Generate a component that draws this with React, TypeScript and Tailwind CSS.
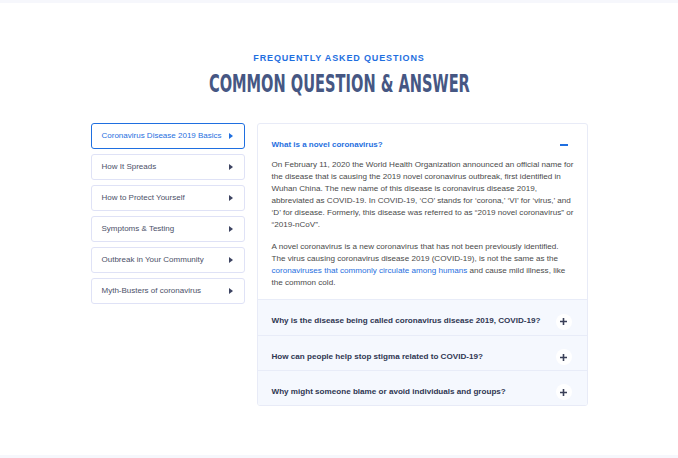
import React from "react";

const tabs = [
  "Coronavirus Disease 2019 Basics",
  "How It Spreads",
  "How to Protect Yourself",
  "Symptoms & Testing",
  "Outbreak in Your Community",
  "Myth-Busters of coronavirus",
];

const questions = [
  "Why is the disease being called coronavirus disease 2019, COVID-19?",
  "How can people help stop stigma related to COVID-19?",
  "Why might someone blame or avoid individuals and groups?",
];

function Caret({ active }: { active: boolean }) {
  return (
    <svg width="4" height="6" viewBox="0 0 4 6" className={active ? "text-[#1f6fe0]" : "text-[#3d4462]"}>
      <path d="M0 0 L4 3 L0 6 Z" fill="currentColor" />
    </svg>
  );
}

export default function App() {
  return (
    <div className="w-[678px] h-[458px] bg-white flex flex-col" style={{ fontFamily: '"Liberation Sans", Arial, sans-serif' }}>
      <div className="h-[3px] bg-[#f6f7fc]" />
      <div className="flex-1 flex flex-col items-center">
        <div className="mt-[49px] text-[9px] font-bold tracking-[0.85px] text-[#1f6fe0] leading-[12px]">
          FREQUENTLY ASKED QUESTIONS
        </div>
        <h2
          className="mt-[5px] text-[25px] font-bold text-[#465783] leading-[30px] scale-x-[0.584] origin-center whitespace-nowrap"
          style={{ fontFamily: '"DejaVu Sans", sans-serif' }}
        >
          COMMON QUESTION &amp; ANSWER
        </h2>
        <div className="mt-[24px] w-[497px] grid grid-cols-[154px_331px] gap-[12px] items-start">
          <div className="flex flex-col gap-[5px]">
            {tabs.map((t, i) => {
              const active = i === 0;
              return (
                <div
                  key={t}
                  className={
                    "h-[26px] rounded-[3px] border bg-white flex items-center justify-between pl-[10px] pr-[11px] text-[8px] whitespace-nowrap " +
                    (active ? "border-[#1f6fe0] text-[#1f6fe0]" : "border-[#dfe2f6] text-[#4b5068]")
                  }
                >
                  <span>{t}</span>
                  <Caret active={active} />
                </div>
              );
            })}
          </div>
          <div className="rounded-[3px] border border-[#e8ebf7] bg-white overflow-hidden">
            <div className="pl-[14px] pr-[12px] pt-[15px] pb-[10px]">
              <div className="flex items-center justify-between h-[12px]">
                <span className="text-[8px] font-bold text-[#1f6fe0]">What is a novel coronavirus?</span>
                <span className="w-[8px] h-[2px] bg-[#1f6fe0] mr-[7px]" />
              </div>
              <div className="mt-[8px] text-[8.1px] leading-[12px] text-[#4a4a4a]">
                <p>
                  On February 11, 2020 the World Health Organization announced an official name for the disease that is causing the 2019 novel coronavirus outbreak, first identified in Wuhan China. The new name of this disease is coronavirus disease 2019, abbreviated as COVID-19. In COVID-19, ‘CO’ stands for ‘corona,’ ‘VI’ for ‘virus,’ and ‘D’ for disease. Formerly, this disease was referred to as “2019 novel coronavirus” or “2019-nCoV”.
                </p>
                <p className="mt-[10px]">
                  A novel coronavirus is a new coronavirus that has not been previously identified. The virus causing coronavirus disease 2019 (COVID-19), is not the same as the{" "}
                  <span className="text-[#1f6fe0]">coronaviruses that commonly circulate among humans</span> and cause mild illness, like the common cold.
                </p>
              </div>
            </div>
            {questions.map((q, i) => (
              <div
                key={q}
                className={
                  "border-t border-[#e8ecf8] bg-[#f5f8fe] flex items-center justify-between pl-[14px] pr-[15px] pt-[8px] " +
                  (i === 0 ? "h-[36px]" : "h-[35px]")
                }
              >
                <span className="text-[8.1px] font-bold text-[#2f3652] whitespace-nowrap">{q}</span>
                <span className="w-[16px] h-[16px] rounded-full bg-white flex items-center justify-center">
                  <svg width="7" height="7" viewBox="0 0 7 7">
                    <path d="M3.5 0 V7 M0 3.5 H7" stroke="#3a4058" strokeWidth="1.6" />
                  </svg>
                </span>
              </div>
            ))}
          </div>
        </div>
      </div>
      <div className="h-[3px] bg-[#f6f7fc]" />
    </div>
  );
}
